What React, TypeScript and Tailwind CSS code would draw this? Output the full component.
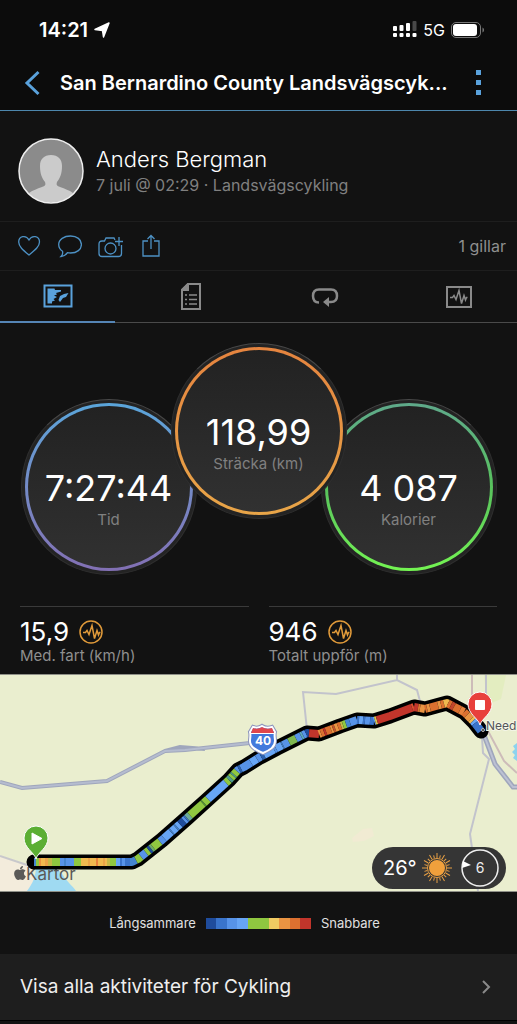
import { FaApple } from "react-icons/fa";

const blue = "#5aa2dc";

const rings = [
  {
    label: "Tid",
    value: "7:27:44",
    wrapper: "mt-14",
    ring: "bg-linear-to-b from-[#5aa5da] to-[#8270b4]",
  },
  {
    label: "Sträcka (km)",
    value: "118,99",
    wrapper: "relative z-10 -mx-[26px] mb-14",
    ring: "bg-linear-to-b from-[#e5843f] to-[#e8a548]",
  },
  {
    label: "Kalorier",
    value: "4 087",
    wrapper: "mt-14",
    ring: "bg-linear-to-b from-[#5fa98a] via-[#58c25c] to-[#74f552]",
  },
];

const stats = [
  { label: "Med. fart (km/h)", value: "15,9" },
  { label: "Totalt uppför (m)", value: "946" },
];

const legend = [
  "bg-[#1f4c9c]",
  "bg-[#3a74cb]",
  "bg-[#5793e8]",
  "bg-[#67a5f5]",
  "bg-[#8fc740]",
  "bg-[#8fc740]",
  "bg-[#f0cb62]",
  "bg-[#ea9442]",
  "bg-[#dc7030]",
  "bg-[#c2352b]",
];

// Route across the map, ordered by x
const route: [number, number][] = [
  [34, 187], [132, 187], [138, 184], [162, 165], [187, 143], [207, 125],
  [229, 105], [238, 95], [244, 92], [260, 82], [277, 73], [307, 58],
  [319, 59], [340, 51], [357, 45], [374, 46], [390, 41], [414, 32],
  [425, 34], [447, 28], [464, 37], [474, 47], [481, 56],
];

// Speed colour from each x until the next entry
const speed: [number, string][] = [
  [34, "#4585cf"], [36, "#8fc740"], [39, "#ea9442"], [41, "#f0b94f"],
  [45, "#eaa348"], [48, "#c3b848"], [52, "#8fc740"], [60, "#5793e8"],
  [64, "#4585cf"], [66, "#5793e8"], [74, "#8fc740"], [81, "#f0b94f"],
  [88, "#eaa348"], [90, "#f0b94f"], [96, "#e8823c"], [98, "#f0b94f"],
  [103, "#eaa348"], [105, "#f0b94f"], [107, "#c3b848"], [110, "#8fc740"],
  [116, "#67a5f5"], [120, "#3a74cb"], [122, "#5793e8"], [125, "#3a74cb"],
  [130, "#4585cf"], [136, "#8fc740"], [141, "#5793e8"], [146, "#8fc740"],
  [149, "#1f4c9c"], [151, "#6cab6a"], [153, "#8fc740"], [160, "#5793e8"],
  [164, "#67a5f5"], [171, "#4585cf"], [172, "#67a5f5"], [176, "#4585cf"],
  [177, "#67a5f5"], [180, "#1f4c9c"], [184, "#5793e8"], [186, "#3a74cb"],
  [187, "#6cab9a"], [190, "#8fc740"], [203, "#56963f"], [204, "#8fc740"],
  [208, "#67a5f5"], [226, "#8fc740"], [229, "#4f9a90"], [231, "#8fc740"],
  [233, "#4f9a90"], [234, "#8fc740"], [237, "#5793e8"], [239, "#2c62b0"],
  [241, "#5793e8"], [251, "#67a5f5"], [257, "#5793e8"], [261, "#2c62b0"],
  [264, "#67a5f5"], [274, "#5793e8"], [276, "#67a5f5"], [282, "#4585cf"],
  [283, "#5793e8"], [289, "#7fb850"], [296, "#5793e8"], [301, "#5aa5b8"],
  [303, "#5793e8"], [306, "#1f4c9c"], [309, "#c2352b"], [319, "#ea9442"],
  [321, "#dc7030"], [324, "#c2352b"], [326, "#dc7030"], [331, "#ea9442"],
  [333, "#c2552b"], [335, "#ea9442"], [338, "#dc7030"], [341, "#c3b848"],
  [343, "#8fc740"], [346, "#4585cf"], [350, "#5793e8"], [357, "#3a74cb"],
  [359, "#67a5f5"], [363, "#3a74cb"], [365, "#5793e8"], [370, "#3a74cb"],
  [374, "#67a5f5"], [375, "#d8c050"], [377, "#c2352b"], [412, "#dc5030"],
  [414, "#c2352b"], [418, "#dc7030"], [420, "#ea9442"], [425, "#dc7030"],
  [427, "#ea9442"], [430, "#dc7030"], [438, "#ea9442"], [441, "#dc7030"],
  [444, "#f0b94f"], [448, "#dc7030"], [451, "#c2452b"], [454, "#dc7030"],
  [460, "#e8823c"], [464, "#dc7030"], [467, "#ea9442"], [471, "#f0b94f"],
  [473, "#67a5f5"], [475, "#3a74cb"], [481, "#3a74cb"],
];

function yAt(x: number) {
  const i = Math.max(1, route.findIndex((p) => p[0] >= x));
  const [x0, y0] = route[i - 1];
  const [x1, y1] = route[i];
  return y0 + ((y1 - y0) * (x - x0)) / (x1 - x0);
}

function toPoints(from: number, to: number) {
  const inner = route.filter((p) => p[0] > from && p[0] < to);
  return [[from, yAt(from)], ...inner, [to, yAt(to)]].join(" ");
}

function PulseLine() {
  return <path d="M4 12.5h2.500l1.500-2 2 4 3-9 2.500 13 2.500-8 1.500 4.500 1-2.500h1" />;
}

function StatusBar() {
  return (
    <div className="flex h-[59px] items-center justify-between pr-8 pl-[39px]">
      <div className="flex items-center gap-1.5">
        <span className="text-xl leading-6 font-semibold">14:21</span>
        <svg
          viewBox="0 0 16 16"
          className="size-4"
          fill="currentColor"
          stroke="currentColor"
          strokeLinejoin="round"
          aria-hidden="true"
        >
          <path d="M15 1L9.500 15L8.500 8.500L1 7.500z" strokeWidth="1.500" />
        </svg>
      </div>
      <div className="flex items-center gap-1.5">
        <svg viewBox="0 0 24 17" className="h-[17px] w-6" fill="currentColor" aria-hidden="true">
          <rect x="0" y="5" width="4" height="5" rx="1" />
          <rect x="6.500" y="4" width="4" height="6" rx="1" />
          <rect x="13" y="2" width="4" height="8" rx="1" />
          <rect x="19.500" y="0" width="4" height="10" rx="1" opacity="0.250" />
          <rect x="0" y="12" width="4" height="4" rx="1" />
          <rect x="6.500" y="12" width="4" height="4" rx="1" />
          <rect x="13" y="12" width="4" height="4" rx="1" />
          <rect x="19.500" y="12" width="4" height="4" rx="1" />
        </svg>
        <span className="text-base leading-6">5G</span>
        <svg viewBox="0 0 34 16" className="h-4 w-[34px]" aria-hidden="true">
          <rect x="0.500" y="0.500" width="29" height="15" rx="4.500" fill="none" stroke="#777" />
          <rect x="2" y="2" width="24" height="12" rx="3" fill="#fff" />
          <path d="M31.500 5.500v5c2-.8 2-4.200 0-5z" fill="#777" />
        </svg>
      </div>
    </div>
  );
}

function Ring({ item }: { item: (typeof rings)[number] }) {
  return (
    <div
      className={`size-[176px] shrink-0 rounded-full border border-[#2e2e2e] border-t-[#484848] bg-[#232323] p-[3px] ${item.wrapper}`}
    >
      <div className={`h-full rounded-full p-[3px] ${item.ring}`}>
        <div className="flex h-full flex-col items-center rounded-full bg-linear-to-b from-[#222] to-[#313131] pt-[62px]">
          <span className="text-4xl leading-10 whitespace-nowrap">{item.value}</span>
          <span className="text-[15px] leading-6 text-[#808080]">{item.label}</span>
        </div>
      </div>
    </div>
  );
}

function RouteMap() {
  return (
    <svg
      viewBox="0 0 517 216"
      className="block w-full border-y border-[#8f9088] bg-[#eaeecf]"
      role="img"
      aria-label="Karta"
    >
      <path d="M0 180l32 11 4 25H0z" fill="#f3ecdc" />
      <path d="M36 190c10 4 20 0 27 10 3 6 9 10 13 16H27c6-8 9-15 9-26z" fill="#9fdaf2" />
      <path d="M352 163l11-9 9-1 2 8-10 5-11 1z" fill="#f1ebd3" />
      <path d="M484 0h22l-5 24-14 6z" fill="#e3edc0" />
      <path d="M517 68v18l-4-3 2-3-3-3 3-3-2-3z" fill="#8cd3ee" />
      <g fill="none" stroke="#c2c3cc" strokeWidth="2">
        <path d="M307 55l-4-38 33 2 61-14 20 10 4 15M397 0v5" />
        <path d="M486 0v26M482 62l1 16 6 6-19 75 8 57" />
      </g>
      <path d="M0 181l30 10" stroke="#c8c8cb" strokeWidth="2" />
      <path d="M472 0v30M488 56l16 30 13 12" fill="none" stroke="#cdbcb9" strokeWidth="2" />
      <path
        d="M0 107l22 6 85-7 58-30 20-1 65-7M165 76l15-4 25 2"
        fill="none"
        stroke="#9fa6bc"
        strokeWidth="4"
      />
      <path d="M0 107l22 6 85-7 58-30 20-1 65-7" fill="none" stroke="#b5bccf" strokeWidth="2" />
      <path d="M484 60l11 29 18 23h6" fill="none" stroke="#9fa6bc" strokeWidth="5" />
      <path d="M484 60l11 29 18 23h6" fill="none" stroke="#bcc1d3" strokeWidth="2" />

      <FaApple x="12" y="190" width="14" height="15" color="#5a5a58" />
      <text x="26" y="205" fontSize="17" fill="#5a5a58">
        Kartor
      </text>

      <polyline
        points={route.join(" ")}
        fill="none"
        stroke="#000"
        strokeWidth="15"
        strokeLinejoin="round"
        strokeLinecap="round"
      />
      {speed.slice(0, -1).map(([x, color], i) => (
        <polyline
          key={x}
          points={toPoints(x, speed[i + 1][0])}
          fill="none"
          stroke={color}
          strokeWidth="8"
          strokeLinejoin="round"
        />
      ))}

      <g>
        <path
          d="M253 52c3 1 6 1 9-1 3 2 7 2 10 1l3 5c-1 3 0 6 0 9 0 6-5 9-12 12-7-3-13-6-13-12 0-3 1-6 0-9z"
          fill="#4279dc"
          stroke="#8d94bd"
          strokeWidth="4"
        />
        <path
          d="M253 52c3 1 6 1 9-1 3 2 7 2 10 1l3 5c-1 3 0 6 0 9 0 6-5 9-12 12-7-3-13-6-13-12 0-3 1-6 0-9z"
          fill="#4279dc"
          stroke="#fff"
          strokeWidth="2"
        />
        <path d="M253 53c3 1 6 1 9-1 3 2 7 2 10 1l2 5h-23z" fill="#e0464c" />
        <path d="M251 58.500h23" stroke="#fff" />
        <text x="263" y="70" fontSize="12" fontWeight="700" fill="#fff" textAnchor="middle">
          40
        </text>
      </g>

      <text x="486" y="55" fontSize="12" fill="#55555a" stroke="#f4f5e6" strokeWidth="2" paintOrder="stroke">
        Need
      </text>

      <g stroke="#fff">
        <path d="M36 184c-2-7-12-11-12-21a12 12 0 0 1 24 0c0 10-10 14-12 21z" fill="#5bae33" />
        <path d="M32 158v11l10-5.500z" fill="#fff" />
        <path d="M480 50c-2-7-12-11-12-21a12 12 0 0 1 24 0c0 10-10 14-12 21z" fill="#e8403c" />
        <path d="M475.500 25.500h9v9h-9z" fill="#fff" />
      </g>
      <circle cx="483" cy="55" r="1.500" fill="#333" stroke="#bbb" />
    </svg>
  );
}

function Weather() {
  return (
    <div className="absolute right-[11px] bottom-[3px] flex h-[42px] items-center rounded-full bg-[#353535] pr-[7px] pl-[11px]">
      <span className="w-[38px] text-xl leading-6">26°</span>
      <svg viewBox="0 0 32 32" className="size-8" aria-label="Soligt" role="img">
        {Array.from({ length: 24 }, (_, i) => (
          <path
            key={i}
            d={i % 2 ? "M16 3v3" : "M16 1v5"}
            stroke="#e8a045"
            transform={`rotate(${i * 15} 16 16)`}
          />
        ))}
        <circle cx="16" cy="16" r="9.500" fill="#353535" stroke="#e8a045" />
        <circle cx="16" cy="16" r="8" fill="#f0a03c" />
      </svg>
      <svg viewBox="0 0 38 38" className="ml-2 size-[38px]" aria-label="Vind 6" role="img">
        <circle cx="19" cy="19" r="18" fill="none" stroke="#eee" strokeWidth="1.500" />
        <path d="M2 12l8 4-9 3z" fill="#fff" />
        <text x="19" y="24" fontSize="14" fill="#eee" textAnchor="middle">
          6
        </text>
      </svg>
    </div>
  );
}

export default function App() {
  return (
    <div className="min-h-screen bg-[#121212] font-[Inter,sans-serif] text-white">
      <header className="border-b border-[#4d87ad] bg-[#0c0c0c]">
        <StatusBar />
        <div className="flex h-[51px] items-center pr-9 pb-1 pl-6">
          <button type="button" aria-label="Tillbaka">
            <svg viewBox="0 0 16 26" className="h-[26px] w-4" fill="none" stroke={blue} strokeWidth="3">
              <path d="M14.500 2L3 13l11.500 11" />
            </svg>
          </button>
          <h1 className="ml-5 flex-1 text-xl leading-7 font-semibold whitespace-nowrap">
            San Bernardino County Landsvägscyk...
          </h1>
          <button type="button" aria-label="Mer">
            <svg viewBox="0 0 5 25" className="h-[25px] w-[5px]" fill={blue}>
              <path d="M0 0h5v5H0zM0 10h5v5H0zM0 20h5v5H0z" />
            </svg>
          </button>
        </div>
      </header>

      <section className="flex h-[111px] items-center gap-3 border-b border-[#1e1e1e] px-[18px] pt-2.5">
        <svg viewBox="0 0 66 66" className="size-[66px]" aria-hidden="true">
          <circle cx="33" cy="33" r="32" fill="#8b8b8b" />
          <path
            d="M33 17c7 0 11 4 11 11 0 8-2 12-5 16-1 3 0 4 3 5 5 2 9 3 13 6-6 7-14 9-22 9s-16-2-22-9c4-3 8-4 13-6 3-1 4-2 3-5-3-4-5-8-5-16 0-7 4-11 11-11z"
            fill="#cbcbcb"
          />
          <circle cx="33" cy="33" r="32" fill="none" stroke="#eee" strokeWidth="1.500" />
        </svg>
        <div>
          <h2 className="text-[22px] leading-7 font-light">Anders Bergman</h2>
          <p className="text-base leading-6 text-[#808080]">7 juli @ 02:29 · Landsvägscykling</p>
        </div>
      </section>

      <section className="flex h-[49px] items-center border-b border-[#1e1e1e] pr-[11px] pl-[18px] text-[#4d91c4]">
        <button type="button" aria-label="Gilla">
          <svg viewBox="0 0 24 24" className="size-6" fill="none" stroke="currentColor" strokeWidth="1.300">
            <path d="M11 21C5 16 .7 12.500.7 8 .7 2 8 .5 11 6c3-5.500 10.500-4 10.500 2 0 4.500-4.500 8-10.500 13z" />
          </svg>
        </button>
        <button type="button" aria-label="Kommentera" className="ml-4">
          <svg viewBox="0 0 24 24" className="size-6" fill="none" stroke="currentColor" strokeWidth="1.300">
            <path d="M12.500 2C19 2 23.400 5.500 23.400 10.500S19 19 12.500 19c-1 0-2-.1-3-.3-1.500 2.300-3.500 3.500-6.500 3.800 1.500-1.500 2-3.300 1.500-5.300C2 15.500.7 13.300.7 10.500.7 5.500 6 2 12.500 2z" />
          </svg>
        </button>
        <button type="button" aria-label="Lägg till foto" className="ml-4">
          <svg viewBox="0 0 26 24" className="h-6 w-[26px]" fill="none" stroke="currentColor" strokeWidth="1.300">
            <path d="M17 6l-1-2H8L6.500 7H4c-2 0-3 1-3 3v9.500c0 2 1 3 3 3h16.500c2 0 3-1 3-3V11M21 3v9M17 7.500h8" />
            <circle cx="12.500" cy="14.500" r="5.500" />
          </svg>
        </button>
        <button type="button" aria-label="Dela" className="ml-[18px]">
          <svg viewBox="0 0 18 24" className="h-6 w-[18px]" fill="none" stroke="currentColor" strokeWidth="1.300">
            <path d="M6 7H1v15h16V7h-5M9 15V1.500M5.500 5L9 1.500 12.500 5" />
          </svg>
        </button>
        <span className="ml-auto text-base leading-6 text-[#8f8f8f]">1 gillar</span>
      </section>

      <nav className="grid grid-cols-[repeat(4,26%)] border-b border-[#4a4a4a] text-[#8a8a8a]">
        <button
          type="button"
          aria-label="Översikt"
          className="-mb-px flex h-[52px] w-[115px] items-center justify-center border-b-2 border-[#5585b5]"
        >
          <svg viewBox="0 0 30 24" className="h-6 w-[30px]" fill={blue}>
            <path d="M1.500 1.500h27v21h-27z" fill="none" stroke={blue} strokeWidth="2" />
            <path d="M4.500 4.500h7l.5 1.500h6v1.500l-5 1.500 1 1.500-3 1 3 1.500-3.500 2 1.500 1.500-3 1v2H4.500z" />
            <path d="M25.500 9l-2.500 4-3 1-3 4-1.500-2 1.500-4 4-2z" />
          </svg>
        </button>
        <button type="button" aria-label="Statistik" className="flex h-[51px] items-center pl-[47px]">
          <svg viewBox="0 0 20 27" className="h-[27px] w-5" fill="none" stroke="currentColor" strokeWidth="2">
            <path d="M7 1h12v25H1V7z" />
            <path d="M7 1v6H1z" fill="currentColor" />
            <path d="M4 12h2M8 12h8M4 16.500h2M8 16.500h8M4 21h2M8 21h8" strokeWidth="1.500" />
          </svg>
        </button>
        <button type="button" aria-label="Varv" className="flex h-[51px] items-center pl-[42px]">
          <svg viewBox="0 0 28 20" className="h-5 w-7" fill="none" stroke="currentColor" strokeWidth="2.500">
            <path d="M8 15.500C4 15.500 2 13 2 9s2-6.500 6-6.500h12C24 2.500 26 5 26 9s-2 6-6 6h-3" />
            <path d="M12 15l6-5v10z" fill="currentColor" stroke="none" />
          </svg>
        </button>
        <button type="button" aria-label="Diagram" className="flex h-[51px] items-center pl-[43px]">
          <svg viewBox="0 0 26 24" className="h-6 w-[26px]" fill="none" stroke="currentColor" strokeWidth="1.500">
            <path d="M1 2h24v20H1z" strokeWidth="2" />
            <PulseLine />
          </svg>
        </button>
      </nav>

      <section className="flex justify-center pt-5">
        {rings.map((item) => (
          <Ring key={item.label} item={item} />
        ))}
      </section>

      <section className="mt-[31px] grid grid-cols-2 gap-x-5 px-5">
        {stats.map((stat) => (
          <div key={stat.label} className="h-[68px] border-t border-[#3a3a3a] pt-[11px]">
            <div className="flex items-center gap-2.5">
              <span className="text-[26px] leading-7">{stat.value}</span>
              <svg
                viewBox="0 0 24 24"
                className="size-6"
                fill="none"
                stroke="#e09a3a"
                strokeWidth="1.500"
                aria-hidden="true"
              >
                <circle cx="12" cy="12" r="11" />
                <PulseLine />
              </svg>
            </div>
            <p className="text-[15px] leading-5 text-[#8f8f8f]">{stat.label}</p>
          </div>
        ))}
      </section>

      <section className="relative">
        <RouteMap />
        <Weather />
      </section>

      <div className="flex h-[62px] items-center justify-center gap-2.5 pr-7 text-[13px] leading-5 text-[#e0e0e0]">
        <span>Långsammare</span>
        <div className="grid w-[105px] grid-cols-10">
          {legend.map((color, i) => (
            <span key={i} className={`h-[11px] ${color}`} />
          ))}
        </div>
        <span>Snabbare</span>
      </div>

      <a
        href="#cykling"
        className="flex h-[67px] items-center justify-between border-b border-black bg-[#1e1e1e] pr-[26px] pl-5"
      >
        <span className="text-[19px] leading-7 text-[#eee]">Visa alla aktiviteter för Cykling</span>
        <svg viewBox="0 0 10 14" className="h-3.5 w-2.5" fill="none" stroke="#8a8a8a" strokeWidth="2" aria-hidden="true">
          <path d="M2 1l6 6-6 6" />
        </svg>
      </a>
    </div>
  );
}
